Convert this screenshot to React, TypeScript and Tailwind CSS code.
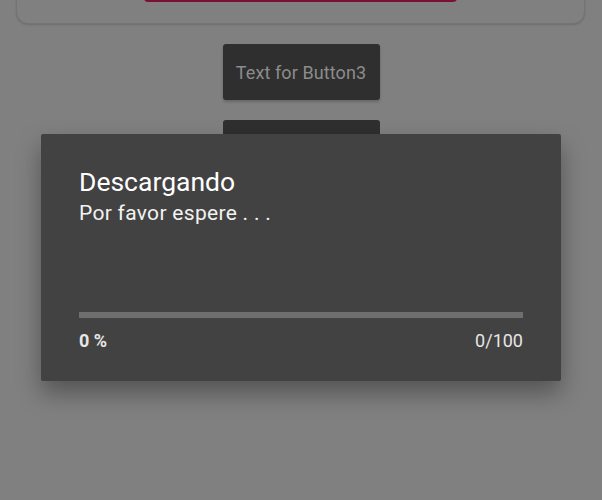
import React from 'react';

const App: React.FC = () => {
  return (
    <div className="relative h-[500px] w-[602px] overflow-hidden bg-[#808080]" style={{ fontFamily: 'Roboto, "Noto Sans", sans-serif' }}>
      {/* page content behind the scrim */}
      <div className="flex flex-col items-center">
        <div className="mt-[-60px] flex h-[84px] w-[569px] flex-col items-center justify-end self-start ml-4 rounded-[12px] border border-[#747474] bg-[#808080] pb-[21px] shadow-[0_1px_2px_rgba(0,0,0,0.15)]">
          <div className="h-[8px] w-[313px] rounded-b-sm bg-[#7a1034]" />
        </div>
        <button className="mt-[20px] flex h-[56px] w-[157px] items-center justify-center rounded-[3px] bg-[#2f2f2f] text-[18px] tracking-[0.1px] text-[#8c8c8c] shadow-[0_2px_3px_rgba(0,0,0,0.2)]">
          Text for Button3
        </button>
        <button className="mt-[20px] h-[56px] w-[157px] rounded-[3px] bg-[#2f2f2f]" />
      </div>

      {/* progress dialog */}
      <div className="absolute left-[41px] top-[134px] flex h-[247px] w-[520px] flex-col rounded-[2px] bg-[#424242] px-[38px] pt-[32px] shadow-[0_12px_24px_rgba(0,0,0,0.35)]">
        <div className="text-[26.5px] leading-[32px] text-white">Descargando</div>
        <div className="mt-[2px] text-[21px] leading-[26px] tracking-[0.3px] text-[#f2f2f2]">Por favor espere . . .</div>
        <div className="mt-[86px] h-[6px] w-full bg-[#6e6e6e]" />
        <div className="mt-[12px] flex justify-between text-[18px] leading-[22px] text-[#e6e6e6]">
          <span className="font-bold">0 %</span>
          <span>0/100</span>
        </div>
      </div>
    </div>
  );
};

export default App;
